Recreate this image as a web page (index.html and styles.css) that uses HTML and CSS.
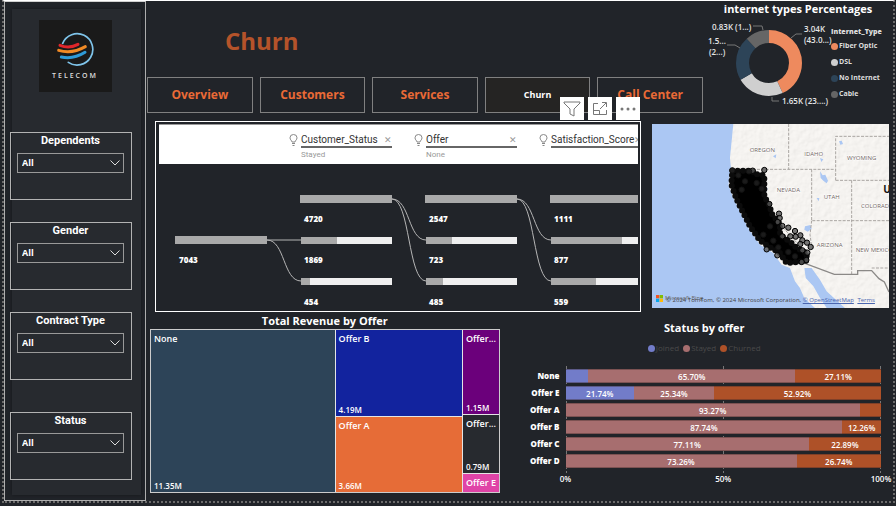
FILE: index.html
```html
<!DOCTYPE html>
<html lang="en">
<head>
<meta charset="utf-8">
<title>Telecom Churn</title>
<link rel="stylesheet" href="styles.css">
</head>
<body>
<div class="canvas">
  <aside class="sidebar">
    <div class="logo">
      <svg width="38" height="36" viewBox="0 0 114 108" fill="none" stroke-linecap="round">
        <path d="M20 37A47 47 0 1 1 37 94" stroke="#7fc4ea" stroke-width="5"/>
        <path d="M12 43Q40 54 66 40" stroke="#e0262b" stroke-width="9"/>
        <path d="M8 58Q48 70 88 47" stroke="#f08a25" stroke-width="9"/>
        <path d="M16 78Q52 86 87 64" stroke="#2e9bd8" stroke-width="9"/>
      </svg>
      <span class="wordmark">TELECOM</span>
    </div>
    <div class="slicer">
      <label for="dependents">Dependents</label>
      <div class="pick"><select id="dependents"><option>All</option></select><svg class="chevron" width="10" height="6" viewBox="0 0 10 6"><path d="M.5.5 5 5 9.500.5"/></svg></div>
    </div>
    <div class="slicer">
      <label for="gender">Gender</label>
      <div class="pick"><select id="gender"><option>All</option></select><svg class="chevron" width="10" height="6" viewBox="0 0 10 6"><path d="M.5.5 5 5 9.500.5"/></svg></div>
    </div>
    <div class="slicer">
      <label for="contract">Contract Type</label>
      <div class="pick"><select id="contract"><option>All</option></select><svg class="chevron" width="10" height="6" viewBox="0 0 10 6"><path d="M.5.5 5 5 9.500.5"/></svg></div>
    </div>
    <div class="slicer last">
      <label for="status">Status</label>
      <div class="pick"><select id="status"><option>All</option></select><svg class="chevron" width="10" height="6" viewBox="0 0 10 6"><path d="M.5.5 5 5 9.500.5"/></svg></div>
    </div>
  </aside>

  <main class="report">
    <div class="row head">
      <header class="masthead">
        <h1>Churn</h1>
        <nav>
          <a href="#overview">Overview</a>
          <a href="#customers">Customers</a>
          <a href="#services">Services</a>
          <a href="#churn" class="current">Churn</a>
          <a href="#call-center">Call Center</a>
        </nav>
      </header>
      <section class="internet">
        <h2>internet types Percentages</h2>
        <div class="donut">
          <svg class="ring" width="128" height="94">
            <g transform="rotate(-90 66 46)" fill="none" stroke-width="13">
              <circle cx="66" cy="46" r="26.500" pathLength="100" stroke="#ee8a5e" stroke-dasharray="43.200 56.800"/>
              <circle cx="66" cy="46" r="26.500" pathLength="100" stroke="#cfcfcf" stroke-dasharray="23.300 76.700" stroke-dashoffset="-43.200"/>
              <circle cx="66" cy="46" r="26.500" pathLength="100" stroke="#2d4458" stroke-dasharray="21.700 78.300" stroke-dashoffset="-66.500"/>
              <circle cx="66" cy="46" r="26.500" pathLength="100" stroke="#666" stroke-dasharray="11.800 88.200" stroke-dashoffset="-88.200"/>
            </g>
            <g fill="none" stroke="#777">
              <path d="M50 9h9l1 4M88 21l5-4h6M24 28h8l5 3M69 80v4h7"/>
            </g>
            <g class="callout">
              <text x="9" y="13">0.83K (1...)</text>
              <text x="101" y="15">3.04K</text>
              <text x="101" y="26">(43.0...)</text>
              <text x="5" y="27">1.5...</text>
              <text x="6" y="38">(2...)</text>
              <text x="79" y="87">1.65K (23....)</text>
            </g>
          </svg>
          <div class="key">
            <strong>Internet_Type</strong>
            <span><i class="dot fiber"></i>Fiber Optic</span>
            <span><i class="dot dsl"></i>DSL</span>
            <span><i class="dot none"></i>No Internet</span>
            <span><i class="dot cable"></i>Cable</span>
          </div>
        </div>
      </section>
    </div>

    <div class="row middle">
      <section class="tree">
        <div class="tools">
          <button type="button" aria-label="Filters"><svg width="18" height="16" viewBox="0 0 18 16"><path d="M1 1h16v1l-6 6v7l-4-2V8L1 2z"/></svg></button>
          <button type="button" aria-label="Focus mode"><svg width="16" height="14" viewBox="0 0 16 14"><path d="M6 1.500H1.500v11h13V8M1.500 8.500h6v4M8 7l6-6M10 .500h4.500V5"/></svg></button>
          <button type="button" aria-label="More options"><svg class="more" width="18" height="4" viewBox="0 0 18 4"><circle cx="3" cy="2" r="1.500"/><circle cx="9" cy="2" r="1.500"/><circle cx="15" cy="2" r="1.500"/></svg></button>
        </div>
        <div class="levels">
          <div class="level">
            <svg class="bulb" width="9" height="12" viewBox="0 0 9 12"><path d="M3 8C3 6.500 1 6 1 3.800a3.500 3.300 0 0 1 7 0C8 6 6 6.500 6 8zM3 9.500h3M3.500 11.500h2"/></svg>
            <div class="field"><p>Customer_Status <button type="button" aria-label="Remove Customer_Status">✕</button></p><small>Stayed</small></div>
          </div>
          <div class="level">
            <svg class="bulb" width="9" height="12" viewBox="0 0 9 12"><path d="M3 8C3 6.500 1 6 1 3.800a3.500 3.300 0 0 1 7 0C8 6 6 6.500 6 8zM3 9.500h3M3.500 11.500h2"/></svg>
            <div class="field"><p>Offer <button type="button" aria-label="Remove Offer">✕</button></p><small>None</small></div>
          </div>
          <div class="level">
            <svg class="bulb" width="9" height="12" viewBox="0 0 9 12"><path d="M3 8C3 6.500 1 6 1 3.800a3.500 3.300 0 0 1 7 0C8 6 6 6.500 6 8zM3 9.500h3M3.500 11.500h2"/></svg>
            <div class="field"><p>Satisfaction_Score <button type="button" aria-label="Remove Satisfaction_Score">✕</button></p></div>
          </div>
        </div>
        <svg class="nodes" width="100%" height="146">
          <g fill="none" stroke="#b5b5b5">
            <path d="M108 76h34M108 76c18 0 16 41 34 41"/>
            <path d="M233 35c18 0 16 41 34 41M233 35c18 0 16 82 34 82"/>
            <path d="M358 35c18 0 16 41 34 41M358 35c18 0 16 82 34 82"/>
          </g>
          <g fill="#efefef">
            <path d="M142 73h91v7h-91zM142 114h91v7h-91zM267 73h91v7h-91zM267 114h91v7h-91zM392 73h91v7h-91zM392 114h91v7h-91z"/>
          </g>
          <g fill="#a9a9a9">
            <path d="M16 72h92v8H16zM141 31h92v8h-92zM266 31h92v8h-92zM391 31h92v8h-92z"/>
            <path d="M142 73h36v7h-36zM142 114h9v7h-9zM267 73h26v7h-26zM267 114h17v7h-17zM392 73h71v7h-71zM392 114h45v7h-45z"/>
          </g>
          <g class="count">
            <text x="20" y="99">7043</text>
            <text x="145" y="58">4720</text><text x="145" y="99">1869</text><text x="145" y="141">454</text>
            <text x="270" y="58">2547</text><text x="270" y="99">723</text><text x="270" y="141">485</text>
            <text x="395" y="58">1111</text><text x="395" y="99">877</text><text x="395" y="141">559</text>
          </g>
        </svg>
      </section>

      <section class="map">
        <svg viewBox="21 18 711 552" preserveAspectRatio="xMidYMid slice">
          <defs>
            <clipPath id="land"><path id="coast" d="M265 18 260 70 255 120 258 150 250 200 265 240 290 290 310 330 345 380 385 405 410 440 435 450 450 490 465 510 478 540 510 570H545L525 540 505 505 482 480 478 450 500 450 525 485 545 520 600 570H732V18z"/></clipPath>
            <filter id="relief" x="0" y="0" width="100%" height="100%">
              <feTurbulence type="fractalNoise" baseFrequency=".060" numOctaves="3" seed="4"/>
              <feDiffuseLighting surfaceScale="3" lighting-color="#fff"><feDistantLight azimuth="225" elevation="55"/></feDiffuseLighting>
            </filter>
          </defs>
          <rect x="21" y="18" width="711" height="552" fill="#abc7f3"/>
          <g clip-path="url(#land)">
            <rect x="240" y="18" width="492" height="552" fill="#f8f6f2"/>
            <rect x="240" y="18" width="492" height="552" filter="url(#relief)" opacity=".25"/>
          </g>
          <g fill="#abc7f3">
            <path d="M525 160l8 12 8-2 8 18-4 8-10-8-8-8zM582 70l8-2 4 10-8 2zM480 325l16-4 4 12-12 8-10-6zM480 110l-4 12M384 115l10-6-2 12zM525 120l10 4-6 8zM515 240l8 0-2 10zM360 205l8 6-4 12z"/>
          </g>
          <g fill="none" stroke="#a9a5a2" stroke-width="3" stroke-dasharray="9 4">
            <path d="M258 154H572M431 18V154M572 187V55H732M572 187H732M500 154V308H732M620 187V470M360 154V270L470 390M500 308 495 350 500 385M680 450H732"/>
          </g>
          <path d="M435 437H482L568 469H638V458H680L702 482 718 492 732 522" fill="none" stroke="#8b8987" stroke-width="4"/>
          <path class="cluster" d="M262 158H322L328 168 358 172 358 235 372 260 382 290 405 318 405 350 440 375 455 390 485 405 485 428 425 436 405 405 370 385 345 368 315 325 295 285 275 245 259 200z"/>
          <g class="pins">
            <circle cx="358" cy="156" r="8"/><circle cx="323" cy="158" r="8"/><circle cx="402" cy="287" r="8"/><circle cx="404" cy="300" r="8"/><circle cx="398" cy="312" r="8"/><circle cx="412" cy="324" r="8"/><circle cx="430" cy="329" r="8"/><circle cx="450" cy="339" r="8"/><circle cx="466" cy="352" r="8"/><circle cx="452" cy="356" r="8"/><circle cx="436" cy="355" r="8"/><circle cx="472" cy="367" r="8"/><circle cx="486" cy="374" r="8"/><circle cx="466" cy="378" r="8"/><circle cx="497" cy="387" r="8"/><circle cx="472" cy="397" r="8"/><circle cx="487" cy="404" r="8"/><circle cx="484" cy="426" r="8"/><circle cx="470" cy="432" r="8"/><circle cx="365" cy="394" r="8"/><circle cx="397" cy="412" r="8"/><circle cx="412" cy="355" r="8"/><circle cx="373" cy="258" r="8"/>
          </g>
          <g class="pins dense">
            <circle cx="430" cy="402" r="8"/><circle cx="450" cy="415" r="8"/><circle cx="375" cy="325" r="8"/><circle cx="335" cy="195" r="8"/><circle cx="290" cy="215" r="8"/><circle cx="355" cy="350" r="8"/><circle cx="280" cy="172" r="8"/><circle cx="262" cy="157" r="8"/><circle cx="312" cy="160" r="8"/><circle cx="350" cy="212" r="8"/><circle cx="385" cy="368" r="8"/><circle cx="400" cy="388" r="8"/><circle cx="300" cy="190" r="8"/>
          </g>
          <g class="states">
            <text x="352" y="101">OREGON</text><text x="506" y="113">IDAHO</text><text x="650" y="125">WYOMING</text>
            <text x="430" y="221">NEVADA</text><text x="560" y="242">UTAH</text><text x="697" y="271">COLORADO</text>
            <text x="554" y="387">ARIZONA</text><text x="688" y="401">NEW MEXICO</text>
          </g>
          <text class="country" x="715" y="224">U</text>
          <path fill="#f35325" d="M33 531h10v10H33z"/><path fill="#81bc06" d="M44 531h10v10H44z"/>
          <path fill="#05a6f0" d="M33 542h10v10H33z"/><path fill="#ffba08" d="M44 542h10v10H44z"/>
          <text class="brand" x="60" y="547">Microsoft Bing</text>
        </svg>
        <p class="credit">© 2024 TomTom, © 2024 Microsoft Corporation, <a href="#osm">© OpenStreetMap</a> <a href="#terms">Terms</a></p>
      </section>
    </div>

    <div class="row bottom">
      <section class="revenue">
        <h2>Total Revenue by Offer</h2>
        <div class="treemap">
          <div class="tile slate"><span>None</span><span class="sum">11.35M</span></div>
          <div class="stack pair">
            <div class="tile blue"><span>Offer B</span><span class="sum">4.19M</span></div>
            <div class="tile orange"><span>Offer A</span><span class="sum">3.66M</span></div>
          </div>
          <div class="stack trio">
            <div class="tile purple"><span>Offer...</span><span class="sum">1.15M</span></div>
            <div class="tile dark"><span>Offer...</span><span class="sum">0.79M</span></div>
            <div class="tile pink"><span>Offer E</span></div>
          </div>
        </div>
      </section>
      <section class="share">
        <h2>Status by offer</h2>
        <div class="legend">
          <span><i class="dot joined"></i>Joined</span><span><i class="dot stayed"></i>Stayed</span><span><i class="dot churned"></i>Churned</span>
        </div>
        <div class="chart">
          <div class="names"><span>None</span><span>Offer E</span><span>Offer A</span><span>Offer B</span><span>Offer C</span><span>Offer D</span></div>
          <div class="plot">
            <div class="bar"><b class="joined" style="width:7.19%"></b><b class="stayed" style="width:65.70%">65.70%</b><b class="churned" style="width:27.11%">27.11%</b></div>
            <div class="bar"><b class="joined" style="width:21.74%">21.74%</b><b class="stayed" style="width:25.34%">25.34%</b><b class="churned" style="width:52.92%">52.92%</b></div>
            <div class="bar"><b class="stayed" style="width:93.27%">93.27%</b><b class="churned" style="width:6.73%"></b></div>
            <div class="bar"><b class="stayed" style="width:87.74%">87.74%</b><b class="churned" style="width:12.26%">12.26%</b></div>
            <div class="bar"><b class="stayed" style="width:77.11%">77.11%</b><b class="churned" style="width:22.89%">22.89%</b></div>
            <div class="bar"><b class="stayed" style="width:73.26%">73.26%</b><b class="churned" style="width:26.74%">26.74%</b></div>
          </div>
          <div class="axis"><span>0%</span><span>50%</span><span>100%</span></div>
        </div>
      </section>
    </div>
  </main>
</div>
</body>
</html>
```
FILE: styles.css
```css
* { box-sizing: border-box; }
body {
  margin: 0;
  background: #212429;
  color: #fff;
  font-family: "Open Sans", "Noto Sans", sans-serif;
  font-size: 8px;
  line-height: 12px;
}
h1, h2, p { margin: 0; }
h2 { font-size: 11px; line-height: 16px; font-weight: 700; text-align: center; }
button { border: 0; padding: 0; background: none; font: inherit; }

.canvas {
  display: grid;
  grid-template-columns: 142px 1fr;
  min-height: calc(100vh - 3px);
  margin: 0 1px 3px 2px;
  border: 2px dotted #6b6b6b;
  border-top: 1px solid #fff;
}

/* Sidebar */
.sidebar {
  position: relative;
  display: flex;
  flex-direction: column;
  gap: 22px;
  padding: 18px 13px 20px 5px;
  border: 1px solid #b0b0b0;
  border-top-color: #d0d0d0;
}
.sidebar::before {
  content: "";
  position: absolute;
  inset: 7px 4px 5px 7px;
  background: #272a2f;
  box-shadow: 0 0 4px #15171a;
}
.sidebar > * { position: relative; }
.logo {
  display: flex;
  flex-direction: column;
  align-items: center;
  justify-content: center;
  align-self: center;
  gap: 4px;
  width: 73px;
  height: 72px;
  margin: 0 0 18px 8px;
  background: #1a1a1a;
}
.wordmark { font: 600 7px/10px "Open Sans", sans-serif; letter-spacing: 2px; color: #ddd; }
.slicer {
  height: 68px;
  padding: 0 7px 0 6px;
  border: 1px solid #b3b3b3;
  text-align: center;
}
.slicer.last { margin-top: auto; }
.slicer label {
  display: block;
  font: 700 11px/16px Roboto, sans-serif;
}
.pick { position: relative; margin-top: 4px; }
.pick select {
  display: block;
  width: 100%;
  height: 20px;
  padding: 0 4px;
  border: 1px solid #999;
  border-radius: 0;
  appearance: none;
  background: #272a2f;
  color: #fff;
  font: 700 9px/16px "Open Sans", sans-serif;
}
.chevron { position: absolute; right: 4px; top: 7px; fill: none; stroke: #ddd; pointer-events: none; }

/* Rows */
.report { display: flex; flex-direction: column; min-width: 0; }
.row { display: grid; }
.head { grid-template-columns: 556fr 190fr; margin-left: 1px; }
.masthead h1 {
  padding: 24px 0 20px 78px;
  color: #b5532a;
  font-size: 24px;
  line-height: 32px;
  font-weight: 700;
}
nav { display: grid; grid-template-columns: repeat(5, 1fr); gap: 7px; }
nav a {
  border: 1px solid #808080;
  color: #ea6a36;
  font-size: 12px;
  line-height: 34px;
  font-weight: 700;
  text-align: center;
  text-decoration: none;
}
nav a.current { background: #252423; color: #fff; font-size: 9px; }

/* Donut */
.donut { display: flex; }
.ring { flex: 1; min-width: 0; overflow: visible; }
.callout { fill: #e6e6e6; font-size: 8px; font-weight: 600; }
.key { display: flex; flex-direction: column; gap: 4px; padding-top: 10px; width: 62px; flex: none; font-size: 7px; font-weight: 700; white-space: nowrap; color: #ddd; }
.key strong { line-height: 9px; }
.key span { display: flex; align-items: center; gap: 1px; }
.dot { width: 7px; height: 7px; border-radius: 50%; flex: none; }
.fiber { background: #ee8a5e; }
.dsl { background: #cfcfcf; }
.none { background: #2d4458; }
.cable { background: #666; }

/* Decomposition tree */
.middle { grid-template-columns: 486fr 237fr; gap: 11px; padding: 8px 4px 0 9px; }
.tree { position: relative; min-width: 0; height: 191px; padding: 2px 2px 0 3px; border: 1px solid #fff; }
.tools { position: absolute; right: 0; bottom: 100%; display: flex; gap: 4px; margin-bottom: 2px; }
.tools button { display: grid; place-items: center; width: 24px; height: 23px; background: #fff; }
.tools svg { fill: none; stroke: #777; }
.tools .more { fill: #777; stroke: none; }
.levels { display: flex; height: 40px; padding: 9px 0 0 130px; overflow: hidden; background: #fff; border-top: 1px solid #999; }
.level { display: flex; flex: none; gap: 3px; width: 125px; }
.bulb { fill: none; stroke: #888; flex: none; }
.field { width: 91px; font-family: Roboto, sans-serif; }
.field p {
  display: flex;
  justify-content: space-between;
  align-items: center;
  border-bottom: 2px solid #666;
  color: #333;
  font-size: 10px;
  line-height: 12px;
  white-space: nowrap;
}
.field button { color: #999; font-size: 9px; line-height: 10px; }
.field small { display: block; color: #999; font-size: 8px; line-height: 13px; }
.nodes { display: block; }
.count { fill: #fff; font-size: 8px; font-weight: 800; }

/* Map */
.map { position: relative; min-width: 0; margin-top: 3px; height: 184px; overflow: hidden; }
.map svg { display: block; width: 100%; height: 100%; }
.cluster { fill: #000; stroke: #0b0b0b; stroke-width: 18; stroke-linecap: round; stroke-dasharray: 0 16; }
.pins { fill: #555; fill-opacity: .8; stroke: #000; stroke-width: 3; }
.dense { fill: #222; stroke: #111; }
.states { fill: #6f6461; font-size: 18px; text-anchor: middle; stroke: #fff; stroke-width: 3; paint-order: stroke; }
.country { font-size: 30px; font-weight: 700; fill: #111; }
.brand { fill: #666; font-size: 17px; }
.credit { position: absolute; left: 14px; bottom: 2px; color: #444; font: 6px/12px "Open Sans", sans-serif; white-space: nowrap; }
.credit a { color: #4a66b0; }
.credit a + a { margin-left: 2px; }

/* Treemap */
.bottom { grid-template-columns: 355fr 393fr; flex: 1; }
.revenue { display: flex; flex-direction: column; padding: 1px 1px 8px 4px; }
.treemap {
  display: grid;
  grid-template-columns: 186fr 128fr 36fr;
  flex: 1;
  border: 1px solid #ccc;
  background: #e4e4e4;
  gap: 1px;
}
.stack { display: grid; gap: 1px; min-width: 0; }
.pair { grid-template-rows: 87fr 76fr; }
.trio { grid-template-rows: 85fr 58fr 18fr; }
.tile { display: flex; flex-direction: column; justify-content: space-between; min-width: 0; min-height: 0; padding: 3px 3px 0; font-size: 9px; font-weight: 600; white-space: nowrap; overflow: hidden; }
.sum { font-size: 8px; }
.slate { background: #2d4458; }
.blue { background: #12239e; }
.orange { background: #e66c37; }
.purple { background: #6b007b; }
.dark { background: #272a2f; }
.pink { background: #e044a7; }

/* Stacked bars */
.share { padding: 8px 0 0 15px; min-width: 0; }
.legend { display: flex; justify-content: center; gap: 4px; padding-top: 6px; color: #4a4a4a; }
.legend span { display: flex; align-items: center; gap: 1px; }
.joined { background: #727cc9; }
.stayed { background: #a76e6f; }
.churned { background: #ae5128; }
.chart { display: grid; grid-template-columns: 44px 1fr; column-gap: 6px; margin: 10px 12px 0 0; }
.names, .plot { display: grid; grid-auto-rows: 14px; gap: 3px; padding: 5px 0; }
.names { text-align: right; font-weight: 800; line-height: 14px; }
.plot {
  background:
    repeating-linear-gradient(#212429 0 2px, transparent 2px 5px),
    linear-gradient(#777, #777) 0 0 / 1px 100% no-repeat,
    linear-gradient(#777, #777) 50% 0 / 1px 100% no-repeat,
    linear-gradient(#777, #777) 100% 0 / 1px 100% no-repeat;
}
.bar { display: flex; }
.bar b { border: solid rgba(60, 40, 40, .4); border-width: 1px 0; font-weight: 600; line-height: 13px; text-align: center; }
.axis { grid-column: 2; display: flex; justify-content: space-between; margin: 0 -12px; font-weight: 600; }
.axis span { width: 24px; text-align: center; }
```
